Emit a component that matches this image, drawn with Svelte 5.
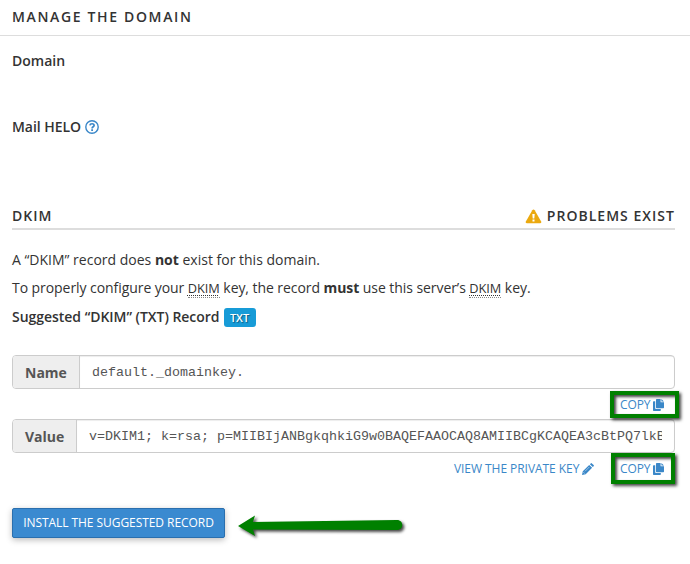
<script>
  const fields = [
    { label: 'Name', value: 'default._domainkey.', kind: 'name' },
    {
      label: 'Value',
      value: 'v=DKIM1; k=rsa; p=MIIBIjANBgkqhkiG9w0BAQEFAAOCAQ8AMIIBCgKCAQEA3cBtPQ7lkB',
      kind: 'value',
      privateKey: true
    }
  ];
</script>

<main>
  <h1><span>MANAGE THE DOMAIN</span></h1>
  <div class="content">
    <div class="prop domain">Domain</div>
    <div class="prop helo">
      <span>Mail HELO</span>
      <svg class="help" width="14" height="14" viewBox="0 0 14 14" fill="none" stroke="#3a87c8">
        <circle cx="7" cy="7" r="6.2" stroke-width="1.4" />
        <path d="M4.9 5.3C5.2 3.2 9.1 3.2 9.1 5.4C9.1 6.8 7.1 6.8 7.1 8.4" stroke-width="1.7" />
        <path d="M7.1 9.3V11" stroke-width="1.8" />
      </svg>
    </div>

    <header>
      <span class="dkim">DKIM</span>
      <span class="status">
        <svg width="17" height="15" viewBox="0 0 17 15">
          <path d="M8.5 .5Q9.2 .5 9.7 1.3L16 12.3Q17 14.2 15.2 14.3H1.8Q0 14.2 1 12.3L7.3 1.3Q7.8 .5 8.5 .5Z" fill="#eba90f" />
          <path d="M7.3 5H9.7L9.3 9.5H7.7ZM7.5 10.5H9.5V12.4H7.5Z" fill="#fff" />
        </svg>
        <span class="problems">PROBLEMS EXIST</span>
      </span>
    </header>

    <p class="exists">A “DKIM” record does <b>not</b> exist for this domain.</p>
    <p class="configure">To properly configure your <abbr>DKIM</abbr> key, the record <b>must</b> use this server’s <abbr>DKIM</abbr> key.</p>
    <div class="suggested"><span>Suggested “DKIM” (TXT) Record</span><span class="badge">TXT</span></div>

    {#each fields as field}
      <div class="group {field.kind}">
        <div class="label">{field.label}</div>
        <div class="input"><span>{field.value}</span></div>
      </div>
      <div class="actions">
        {#if field.privateKey}
          <a class="view" href="#key"><span>VIEW THE PRIVATE KEY</span>
            <svg width="12" height="12" viewBox="0 0 12 12" fill="#3a87c8">
              <path d="M0 12L.8 8.3L7.2 1.9L10.1 4.8L3.7 11.2ZM7.9 1.2L8.7 .4Q9.3-.2 9.9 .4L11.6 2.1Q12.2 2.7 11.6 3.3L10.8 4.1Z" />
              <path d="M3 8.3L7.3 4M1.3 9.1L2.9 10.7" stroke="#fff" stroke-width=".5" />
            </svg>
          </a>
        {/if}
        <a class="copy" href="#copy"><span>COPY</span>
          <svg width="11" height="12" viewBox="0 0 11 12" fill="#3a87c8">
            <path d="M3.7 0H7.6V3.3H11V8.5Q11 9.2 10.3 9.2H3.7Q3 9.2 3 8.5V.7Q3 0 3.7 0ZM8.4 0L11 2.5H8.4Z" />
            <path d="M0 3Q0 2.3 .7 2.3H2.2V9.2Q2.2 10 3 10H7.8V11.3Q7.8 12 7.1 12H.7Q0 12 0 11.3Z" />
          </svg>
          <i class="mark"></i>
        </a>
      </div>
    {/each}

    <div class="install">
      <button>INSTALL THE SUGGESTED RECORD</button>
      <svg class="arrow" width="174" height="30" viewBox="0 0 174 30">
        <path d="M3 15L20 4.5L18 11L162 9C169 9 169 19 162 19L18 18.5L20 25Z" fill="#008000" />
      </svg>
    </div>
  </div>
</main>

<style>
  :global(body) { background: #fff; }
  main {
    width: 690px; height: 564px; overflow: hidden; box-sizing: border-box;
    font-family: "Open Sans", "Noto Sans", sans-serif; font-size: 14px; color: #333;
  }
  h1 {
    margin: 0; height: 35px; line-height: 34px; padding-left: 12px;
    border-bottom: 1px solid #ddd; font-size: 14px; font-weight: 600; letter-spacing: 1.65px;
  }
  .content { padding: 0 15px 0 12px; }
  .prop { font-weight: 600; line-height: 20px; }
  .domain { padding-top: 15px; height: 66px; }
  .helo { display: flex; align-items: center; gap: 4px; height: 20px; letter-spacing: -.05px; }
  header {
    display: flex; justify-content: space-between; height: 22px; margin-top: 69px;
    line-height: 20px; border-bottom: 2px solid #ddd; font-weight: 600; letter-spacing: 1.02px;
  }
  .status { display: flex; align-items: center; gap: 5px; height: 20px; }
  .status svg { margin-top: 1px; }
  p { margin: 0; line-height: 20px; white-space: nowrap; }
  .exists { margin-top: 20px; }
  .configure { height: 20px; margin-top: 8px; letter-spacing: -.065px; }
  abbr { display: inline-block; height: 18px; line-height: 18px; font-size: 12.8px; border-bottom: 1px dotted #888; text-decoration: underline dotted #333 1px; text-underline-offset: 2px; }
  .suggested { display: flex; align-items: center; gap: 4px; height: 20px; margin-top: 8px; font-weight: 600; letter-spacing: -.03px; }
  .badge {
    height: 19px; width: 32px; margin-top: 3px; border-radius: 3px; background: #179bd7; color: #fff;
    font-size: 11px; line-height: 19px; text-align: center; text-shadow: 1px 1px 1px #0006;
  }
  .group {
    display: flex; width: 663px; height: 34px; box-sizing: border-box;
    border: 1px solid #ccc; border-radius: 4px; overflow: hidden;
  }
  .group.name { margin-top: 29px; }
  .label {
    flex: none; box-sizing: border-box; width: 67px; padding-left: 12px; background: #eee;
    border-right: 1px solid #ccc; color: #555; font-weight: 700; line-height: 33px;
  }
  .value .label { width: 64px; }
  .input {
    flex: 1; min-width: 0; padding: 0 12px; box-shadow: inset 0 1px 1px #00000013;
    color: #555; font: 13.33px/33px "Liberation Mono", "Courier New", monospace;
  }
  .input span { display: block; overflow: hidden; white-space: pre; }
  .actions { display: flex; justify-content: flex-end; height: 30px; padding-right: 11px; }
  a { display: flex; align-items: flex-start; gap: 3px; color: #3a87c8; text-decoration: none; font-size: 12px; line-height: 31px; white-space: nowrap; letter-spacing: -.05px; }
  a svg { margin-top: 10px; }
  .view { margin-right: 25.5px; }
  .copy { position: relative; gap: 2.5px; }
  .mark {
    position: absolute; z-index: 1; left: -10px; top: 2px; width: 69px; height: 27px; box-sizing: border-box;
    border: 4px solid #008000; box-shadow: 2px 2px 3px #000b, inset 2px 2px 3px #000b;
  }
  .value + .actions .mark { left: -9px; top: 0; width: 64px; height: 31px; }
  .install { display: flex; align-items: flex-start; margin-top: 25px; }
  button {
    width: 213px; height: 30px; padding: 0; border: 1px solid #2a6fae; border-radius: 2px;
    background: #3a8ad0; color: #fff; font: 12px/28px "Open Sans", "Noto Sans", sans-serif;
    box-shadow: 0 2px 6px #0004; white-space: nowrap; letter-spacing: -.06px;
  }
  .arrow { margin: 3px 0 0 10px; filter: drop-shadow(2px 2px 1.5px #000b); overflow: visible; }
</style>
